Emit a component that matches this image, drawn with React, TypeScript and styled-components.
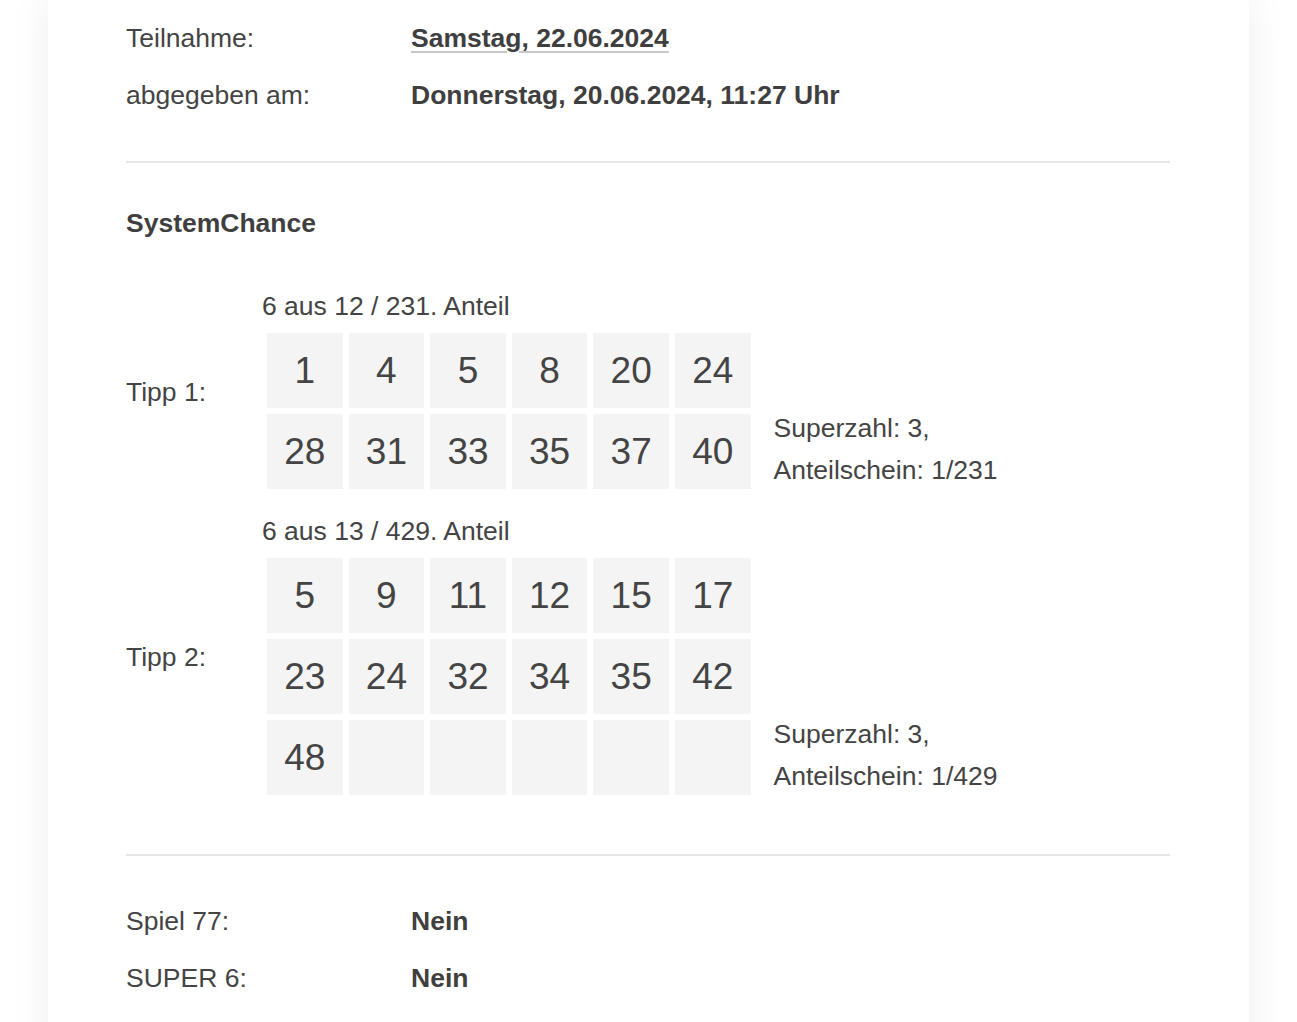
import React from 'react';
import styled, {createGlobalStyle} from 'styled-components';

const GlobalStyle = createGlobalStyle`
  html, body {
    margin: 0;
    padding: 0;
    background: #ffffff;
    overflow: hidden;
  }
  body {
    font-family: 'Liberation Sans', Arial, Helvetica, sans-serif;
    color: #444444;
  }
`;

const Page = styled.div`
  padding: 0 48px;
  box-sizing: border-box;
  width: 100%;
`;

const Card = styled.div`
  background: #ffffff;
  box-shadow: 0 0 40px rgba(0, 0, 0, 0.07);
  padding: 10px 79px 120px 78px;
  min-height: 1100px;
  box-sizing: border-box;
`;

const InfoRow = styled.div`
  display: grid;
  grid-template-columns: 285px 1fr;
  font-size: 26.5px;
  line-height: 57px;
`;

const Label = styled.span`
  font-weight: 400;
`;

const Value = styled.span<{$underline?: boolean}>`
  font-weight: 700;
  color: #3f3f3f;
  text-decoration: ${(p) => (p.$underline ? 'underline' : 'none')};
  text-decoration-color: #c8c8c8;
  text-decoration-thickness: 2px;
  text-underline-offset: 4px;
`;

const Divider = styled.hr<{$top: number; $bottom: number}>`
  border: 0;
  height: 2px;
  background: #e6e6e6;
  margin: ${(p) => p.$top}px 0 ${(p) => p.$bottom}px;
`;

const SectionTitle = styled.div`
  font-size: 26.5px;
  font-weight: 700;
  line-height: 40px;
  margin-top: 40px;
  margin-bottom: 48px;
  color: #3f3f3f;
`;

const TippList = styled.div`
  display: flex;
  flex-direction: column;
  gap: 21px;
`;

const TippBlock = styled.div`
  display: grid;
  grid-template-columns: 136px auto auto;
  justify-content: start;
`;

const TippLabel = styled.div`
  font-size: 26.5px;
  align-self: center;
  margin-top: -2px;
`;

const TippMain = styled.div`
  display: flex;
  flex-direction: column;
`;

const TippHeading = styled.div`
  font-size: 26.5px;
  line-height: 30px;
  margin-bottom: 7px;
`;

const NumberGrid = styled.div`
  display: grid;
  grid-template-columns: repeat(6, 75.6px);
  grid-auto-rows: 75px;
  gap: 6px;
  padding: 5px 6px 6px 5px;
`;

const Cell = styled.div`
  background: #f4f4f4;
  display: flex;
  align-items: center;
  justify-content: center;
  font-size: 37px;
  color: #444444;
`;

const TippNote = styled.div`
  align-self: end;
  margin: 0 0 4px 17px;
  font-size: 26.5px;
  line-height: 42px;
`;

type Tipp = {
  label: string;
  heading: string;
  numbers: number[];
  rows: number;
  anteil: string;
};

const tipps: Tipp[] = [
  {
    label: 'Tipp 1:',
    heading: '6 aus 12 / 231. Anteil',
    numbers: [1, 4, 5, 8, 20, 24, 28, 31, 33, 35, 37, 40],
    rows: 2,
    anteil: '1/231',
  },
  {
    label: 'Tipp 2:',
    heading: '6 aus 13 / 429. Anteil',
    numbers: [5, 9, 11, 12, 15, 17, 23, 24, 32, 34, 35, 42, 48],
    rows: 3,
    anteil: '1/429',
  },
];

const TippView: React.FC<{tipp: Tipp}> = ({tipp}) => {
  const cells: (number | null)[] = Array.from(
    {length: tipp.rows * 6},
    (_, i) => (i < tipp.numbers.length ? tipp.numbers[i] : null),
  );
  return (
    <TippBlock>
      <TippLabel>{tipp.label}</TippLabel>
      <TippMain>
        <TippHeading>{tipp.heading}</TippHeading>
        <NumberGrid>
          {cells.map((n, i) => (
            <Cell key={i}>{n ?? ''}</Cell>
          ))}
        </NumberGrid>
      </TippMain>
      <TippNote>
        Superzahl: 3,
        <br />
        Anteilschein: {tipp.anteil}
      </TippNote>
    </TippBlock>
  );
};

export default function App() {
  return (
    <>
      <GlobalStyle />
      <Page>
        <Card>
          <InfoRow>
            <Label>Teilnahme:</Label>
            <Value $underline>Samstag, 22.06.2024</Value>
          </InfoRow>
          <InfoRow>
            <Label>abgegeben am:</Label>
            <Value>Donnerstag, 20.06.2024, 11:27 Uhr</Value>
          </InfoRow>

          <Divider $top={37} $bottom={0} />

          <SectionTitle>SystemChance</SectionTitle>

          <TippList>
            {tipps.map((t) => (
              <TippView key={t.label} tipp={t} />
            ))}
          </TippList>

          <Divider $top={53} $bottom={37} />

          <InfoRow>
            <Label>Spiel 77:</Label>
            <Value>Nein</Value>
          </InfoRow>
          <InfoRow>
            <Label>SUPER 6:</Label>
            <Value>Nein</Value>
          </InfoRow>
        </Card>
      </Page>
    </>
  );
}
